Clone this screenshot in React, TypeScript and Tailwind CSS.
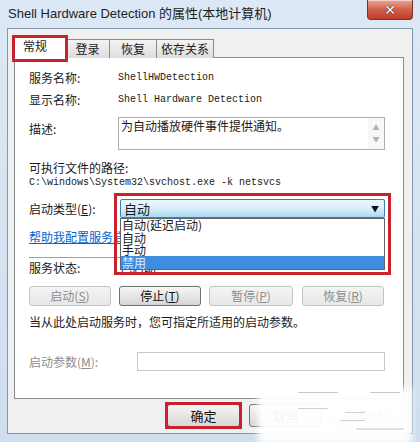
import React from "react";

const CJK = '"Noto Sans CJK SC", "Liberation Sans", sans-serif';
const MONO = '"Liberation Mono", "DejaVu Sans Mono", monospace';

function Btn({
  children,
  disabled,
  className = "",
}: {
  children: React.ReactNode;
  disabled?: boolean;
  className?: string;
}) {
  return (
    <div
      className={
        "flex items-center justify-center rounded-[3px] border text-[12px] leading-none " +
        (disabled
          ? "border-[#c4c4c4] bg-gradient-to-b from-[#f4f4f4] to-[#e8e8e8] text-[#8d8d8d] "
          : "border-[#707070] bg-gradient-to-b from-[#f6f6f6] via-[#e6e6e6] to-[#d6d6d6] text-[#111] ") +
        className
      }
    >
      {children}
    </div>
  );
}

export default function App() {
  return (
    <div
      className="relative flex h-[442px] w-[420px] flex-col overflow-hidden bg-gradient-to-b from-[#dce8f5] to-[#cfdeee] text-[#1a1a1a]"
      style={{ fontFamily: CJK }}
    >
      {/* Title bar */}
      <div className="flex h-[28px] shrink-0 items-start">
        <div
          className="pl-[8px] pt-[5px] text-[13px] leading-[18px] text-[#1e1e1e]"
          style={{ fontFamily: '"Liberation Sans", "Noto Sans CJK SC", sans-serif' }}
        >
          Shell Hardware Detection 的属性(本地计算机)
        </div>
        <div className="ml-auto mr-[7px] flex h-[20px] w-[46px] items-center justify-center rounded-b-[4px] border border-t-0 border-[#6e352e] bg-gradient-to-b from-[#e9a796] via-[#d0604c] to-[#c23a24] shadow-[inset_0_1px_0_rgba(255,255,255,0.5)]">
          <span
            className="text-[14px] font-bold leading-none text-white"
            style={{
              fontFamily: '"DejaVu Sans", sans-serif',
              textShadow: "0 0 1px #4a1a12, 0 0 1px #4a1a12",
            }}
          >
            ✕
          </span>
        </div>
      </div>

      {/* Dialog body */}
      <div className="mx-[7px] flex h-[406px] shrink-0 flex-col border border-[#8496ad] bg-[#f0f0f0] pt-[7px]">
        {/* Tabs */}
        <div className="relative z-10 -mb-px flex h-[22px] items-end pl-[6px] text-[12px]">
          <div className="relative flex h-[22px] w-[52px] items-start border border-b-0 border-[#898c95] bg-white pl-[8px] pt-[1px] leading-[16px]">
            常规
            <div className="absolute -left-[3px] -top-[2px] h-[27px] w-[56px] border-[3px] border-[#c8232c]" />
          </div>
          <div className="flex h-[19px] w-[44px] items-center justify-center border border-b-0 border-l-0 border-[#898c95] bg-gradient-to-b from-[#f3f3f3] to-[#dedede] leading-none">
            登录
          </div>
          <div className="flex h-[19px] w-[47px] items-center justify-center border border-b-0 border-l-0 border-[#898c95] bg-gradient-to-b from-[#f3f3f3] to-[#dedede] leading-none">
            恢复
          </div>
          <div className="flex h-[19px] w-[57px] items-center justify-center border border-b-0 border-l-0 border-[#898c95] bg-gradient-to-b from-[#f3f3f3] to-[#dedede] leading-none">
            依存关系
          </div>
        </div>

        {/* Tab panel */}
        <div className="ml-[6px] mr-[8px] flex h-[342px] flex-col border border-[#898c95] bg-white pl-[14px] pr-[18px] pt-[12px] text-[12px]">
          <div className="flex h-[16px] items-center">
            <div className="w-[89px] shrink-0 leading-none">服务名称:</div>
            <div className="text-[10px] leading-none" style={{ fontFamily: MONO }}>
              ShellHWDetection
            </div>
          </div>
          <div className="mt-[6px] flex h-[16px] items-center">
            <div className="w-[89px] shrink-0 leading-none">显示名称:</div>
            <div className="text-[10px] leading-none" style={{ fontFamily: MONO }}>
              Shell Hardware Detection
            </div>
          </div>
          <div className="mt-[9px] flex h-[33px]">
            <div className="w-[89px] shrink-0 pt-[6px] leading-none">描述:</div>
            <div className="flex flex-1 border border-[#abadb3]">
              <div className="flex-1 pl-[2px] pt-[1px] text-[12px] leading-[14px]">为自动播放硬件事件提供通知。</div>
              <div className="flex w-[16px] flex-col items-center justify-around bg-[#f7f7f7] py-[3px] text-[7px] leading-none text-[#b0b0b0]">
                <span>▲</span>
                <span>▼</span>
              </div>
            </div>
          </div>
          <div className="mt-[10px] flex h-[16px] items-center leading-none">可执行文件的路径:</div>
          <div className="flex h-[14px] items-center text-[10px] leading-none" style={{ fontFamily: MONO }}>
            C:\windows\System32\svchost.exe -k netsvcs
          </div>
          <div className="mt-[9px] flex h-[19px] items-center">
            <div className="w-[91px] shrink-0 leading-none">
              启动类型(<u>E</u>):
            </div>
            <div className="relative z-20 flex h-[19px] flex-1">
              <div className="flex flex-1 items-center rounded-[2px] border border-[#3c7fb1] bg-gradient-to-b from-[#eaf6fd] via-[#d9f0fc] to-[#a7d9f5] pl-[3px] pr-[5px] text-[13px] leading-none">
                <span>自动</span>
                <span className="ml-auto text-[8px] text-[#111]">▼</span>
              </div>
              {/* opened list */}
              <div className="absolute left-0 right-0 top-full flex h-[52px] flex-col border border-[#646464] bg-white text-[12px]">
                <div className="h-[12px] pl-[1px] leading-[12px]">自动(延迟启动)</div>
                <div className="h-[13px] pl-[1px] leading-[13px]">自动</div>
                <div className="h-[12px] pl-[1px] leading-[12px]">手动</div>
                <div className="h-[13px] bg-[#3d8ee0] pl-[1px] leading-[13px] text-[#d8ecff]">禁用</div>
              </div>
              <div className="absolute -left-[6px] -top-[6px] h-[82px] w-[277px] border-[3px] border-[#c8232c]" />
            </div>
          </div>
          <div className="mt-[11px] flex h-[16px] items-center leading-none text-[#0066cc] underline">
            帮助我配置服务启动选项。
          </div>
          <div className="mt-[12px] h-px bg-[#a0a0a0]" />
          <div className="mt-[2px] flex h-[16px] items-center">
            <div className="w-[91px] shrink-0 leading-none">服务状态:</div>
            <div className="leading-none">已启动</div>
          </div>
          <div className="mt-[10px] flex h-[20px] gap-[8px]">
            <Btn disabled className="w-[82px]">
              启动(<u>S</u>)
            </Btn>
            <Btn className="w-[82px]">
              停止(<u>T</u>)
            </Btn>
            <Btn disabled className="w-[84px]">
              暂停(<u>P</u>)
            </Btn>
            <Btn disabled className="ml-[1px] w-[82px]">
              恢复(<u>R</u>)
            </Btn>
          </div>
          <div className="mt-[8px] flex h-[16px] items-center leading-none">
            当从此处启动服务时，您可指定所适用的启动参数。
          </div>
          <div className="mt-[22px] flex h-[19px] items-center">
            <div className="w-[108px] shrink-0 leading-none text-[#8d8d8d]">
              启动参数(<u>M</u>):
            </div>
            <div className="h-[19px] flex-1 border border-[#c8c8c8] bg-white" />
          </div>
        </div>

        {/* Bottom buttons */}
        <div className="mr-[8px] mt-[5px] flex justify-end gap-[9px]">
          <div className="relative">
            <Btn className="h-[23px] w-[73px] border-[#3c7fb1] text-[13px]">确定</Btn>
            <div className="absolute -left-[2px] -top-[2px] h-[27px] w-[77px] border-[3px] border-[#c8232c]" />
          </div>
          <Btn className="h-[23px] w-[73px] text-[13px]">取消</Btn>
          <Btn disabled className="h-[23px] w-[73px] text-[13px]">
            应用(<u>A</u>)
          </Btn>
        </div>
      </div>

      {/* watermark smear over bottom-right */}
      <div className="absolute left-[258px] top-[388px] h-[56px] w-[154px] bg-white/95 blur-[3px]" />
      <div className="absolute left-[298px] top-[392px] h-px w-[40px] bg-[#c8c8c8]" />
      <div className="absolute left-[370px] top-[392px] h-px w-[30px] bg-[#c8c8c8]" />
      <div className="absolute left-[298px] top-[408px] h-px w-[30px] bg-[#d0d0d0]" />
      <div className="absolute left-[345px] top-[412px] h-px w-[20px] bg-[#d0d0d0]" />
      <div className="absolute left-[340px] top-[420px] h-px w-[25px] bg-[#d0d0d0]" />
      <div className="absolute left-[356px] top-[428px] h-[2px] w-[48px] bg-[#dde3dd]" />
    </div>
  );
}
